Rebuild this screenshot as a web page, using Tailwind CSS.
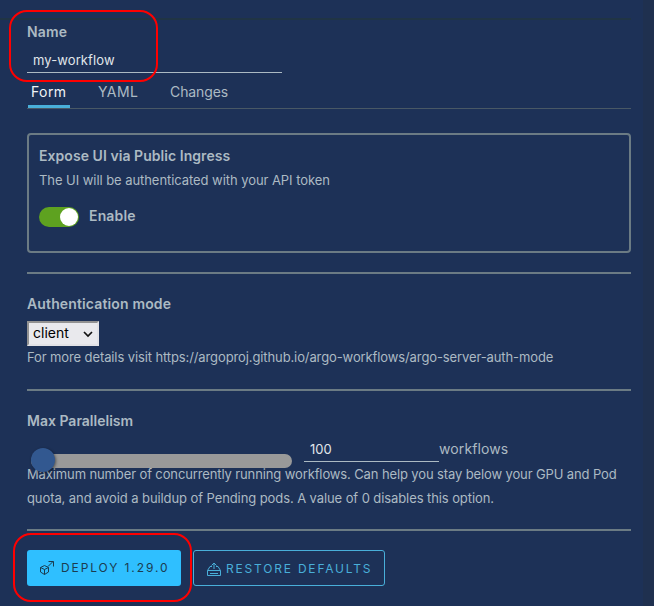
<!DOCTYPE html>
<html lang="en">
<head>
<meta charset="utf-8">
<title>Deploy workflow</title>
<script src="https://cdn.jsdelivr.net/npm/@tailwindcss/browser@4"></script>
</head>
<body class="relative h-[606px] w-[654px] overflow-hidden bg-[#1f304f] font-['Inter',sans-serif] text-[#acbac3]">
<main class="h-[606px] w-[643px] bg-[#1d3157] pr-3">
  <div class="h-[18px]"></div>
  <div class="h-[2px] bg-[#203444]"></div>
  <form class="flex flex-col pl-[27px] text-[13px]">
    <label class="mt-[2px] h-5 text-[14px] leading-5 font-semibold"><span class="tracking-[0.2px]">Name</span></label>
    <div class="mt-[6px] h-[25px] w-[255px] border-b border-[#acbac3] pl-[6px] leading-[25px] text-[#e0e6ea]"><span class="tracking-[0.1px]">my-workflow</span></div>
    <nav class="flex h-9 border-b border-[#495865] text-[14px] leading-[38px]">
      <div class="ml-px h-[35px] w-[42px] border-b-3 border-[#49afd9] pl-[3px] text-[#f0f4f6]"><span class="tracking-[0.4px]">Form</span></div>
      <div class="ml-[28px] w-[72px]"><span class="tracking-[0.4px]">YAML</span></div>
      <div><span class="tracking-[-0.1px]">Changes</span></div>
    </nav>
    <section class="mt-6 h-[120px] rounded-[4px] border-2 border-[#6b7b84] pt-[11px] pl-[10px]">
      <h2 class="h-5 text-[14px] leading-5 font-semibold"><span class="tracking-[0.05px]">Expose UI via Public Ingress</span></h2>
      <p class="mt-1 h-5 leading-5"><span class="tracking-[-0.06px]">The UI will be authenticated with your API token</span></p>
      <div class="mt-[17px] flex h-5 items-center">
        <div class="flex h-5 w-10 items-center justify-end rounded-full bg-[#5ea220] pr-px"><i class="size-[18px] rounded-full bg-white"></i></div>
        <span class="ml-[10px] pb-[3px] text-[14px] font-semibold tracking-[0.15px]">Enable</span>
      </div>
    </section>
    <div class="mt-[19px] h-[2px] bg-[#6b7b84]"></div>
    <h2 class="mt-5 h-5 text-[14px] leading-5 font-semibold"><span class="tracking-[0.14px]">Authentication mode</span></h2>
    <div class="mt-[7px] flex h-[25px] w-[72px] items-center border-2 border-t-[#929292] border-r-[#e2e2e6] border-b-[#e2e2e6] border-l-[#929292] bg-[#e9e9ed] pl-1 text-[14px] text-black"><span class="pb-[2px]">client</span>
      <svg class="mr-[4px] ml-auto" width="10" height="8" viewBox="0 0 10 8" fill="none" stroke="#111" stroke-width="1.7"><path d="M1 2l4 4 4-4"/></svg>
    </div>
    <p class="mt-px h-5 leading-5"><span class="tracking-[-0.11px]">For more details visit https://argoproj.github.io/argo-workflows/argo-server-auth-mode</span></p>
    <div class="mt-[22px] h-[2px] bg-[#6b7b84]"></div>
    <h2 class="mt-5 h-5 text-[14px] leading-5 font-semibold"><span>Max Parallelism</span></h2>
    <div class="flex h-[31px]">
      <div class="mt-[23px] ml-[4px] h-[14px] w-[261px] rounded-full bg-[#999]"><div class="relative -top-[6px] size-6 rounded-full bg-[#325890] shadow-[1px_1px_3px_#0007]"></div></div>
      <div class="ml-3 w-[135px] border-b border-[#acbac3] pt-[7px] pl-[6px] leading-[22px] text-[#e0e6ea]"><span>100</span></div>
      <span class="pt-[6px] text-[14px] leading-[24px] tracking-[0.1px]">workflows</span>
    </div>
    <p class="h-12 leading-6 whitespace-nowrap"><span class="tracking-[-0.12px]">Maximum number of concurrently running workflows. Can help you stay below your GPU and Pod</span><br><span class="tracking-[-0.09px]">quota, and avoid a buildup of Pending pods. A value of 0 disables this option.</span></p>
    <div class="mt-[19px] h-[2px] bg-[#6b7b84]"></div>
    <div class="mt-[19px] flex h-9 gap-3 text-[12px]">
      <button type="button" class="flex w-[154px] items-center rounded-[3px] bg-[#2fbfff] pl-3 text-[#1b3c50]">
        <svg width="16" height="16" viewBox="0 0 16 16" fill="none" stroke="currentColor"><path d="M1.500 7.500L5.500 5.500 9.500 7.500V12L5.500 14.500 1.500 12zM1.500 7.500L5.500 9.500 9.500 7.500M5.500 9.500v5M9 6.500L14 1.500M9.500 1.500h5v5"/></svg>
        <span class="ml-[6px] tracking-[1.9px] whitespace-nowrap">DEPLOY 1.29.0</span>
      </button>
      <button type="button" class="flex w-[192px] items-center rounded-[3px] border border-[#49afd9] pt-[2px] pl-[13px] text-[#49afd9]">
        <svg width="15" height="14" viewBox="0 0 15 14" fill="none" stroke="currentColor"><path d="M5 4.500H3L.5 8.500v5h13v-5L11 4.500H9M.5 8.500h13M3 11.500h8M7 7V1M4.500 3.500L7 1l2.500 2.500"/></svg>
        <span class="ml-1 tracking-[1.8px] whitespace-nowrap">RESTORE DEFAULTS</span>
      </button>
    </div>
  </form>
</main>
<div class="absolute top-[10px] left-[9px] h-[72px] w-[149px] rounded-[18px] border-2 border-[#f00]"></div>
<div class="absolute top-[533px] left-[13px] h-[69px] w-[179px] rounded-[18px] border-2 border-[#f00]"></div>
</body>
</html>
